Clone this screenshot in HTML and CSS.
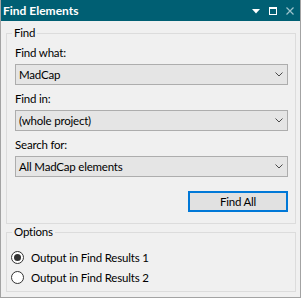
FILE: index.html
```html
<!DOCTYPE html>
<html>
<head>
<meta charset="utf-8">
<link rel="stylesheet" href="styles.css">
</head>
<body>
<div class="window">
  <div class="titlebar">
    <span class="title">Find Elements</span>
    <div class="controls">
      <svg class="ctl-menu" width="8" height="5" viewBox="0 0 8 5"><polygon points="0,0 8,0 4,4.5" fill="#ffffff"/></svg>
      <svg class="ctl-max" width="8" height="8" viewBox="0 0 8 8"><rect x="0.5" y="0.5" width="7" height="7" fill="none" stroke="#ffffff"/><rect x="0" y="0" width="8" height="2" fill="#ffffff"/></svg>
      <svg class="ctl-close" width="8" height="8" viewBox="0 0 8 8"><path d="M0.5 0.5 L7.5 7.5 M7.5 0.5 L0.5 7.5" stroke="#9cc3cc" stroke-width="1.2" fill="none"/></svg>
    </div>
  </div>
  <div class="content">
    <fieldset class="group group-find">
      <legend>Find</legend>
      <div class="field-label first">Find what:</div>
      <div class="combo"><span>MadCap</span><svg width="8" height="5" viewBox="0 0 8 5"><path d="M0.5 0.5 L4 4 L7.5 0.5" stroke="#4a4a4a" fill="none"/></svg></div>
      <div class="field-label">Find in:</div>
      <div class="combo"><span>(whole project)</span><svg width="8" height="5" viewBox="0 0 8 5"><path d="M0.5 0.5 L4 4 L7.5 0.5" stroke="#4a4a4a" fill="none"/></svg></div>
      <div class="field-label">Search for:</div>
      <div class="combo"><span>All MadCap elements</span><svg width="8" height="5" viewBox="0 0 8 5"><path d="M0.5 0.5 L4 4 L7.5 0.5" stroke="#4a4a4a" fill="none"/></svg></div>
      <div class="actions"><button class="btn-default">Find All</button></div>
    </fieldset>
    <fieldset class="group group-options">
      <legend>Options</legend>
      <div class="radio-row"><span class="radio checked"></span>Output in Find Results 1</div>
      <div class="radio-row"><span class="radio"></span>Output in Find Results 2</div>
    </fieldset>
  </div>
</div>
</body>
</html>
```

FILE: styles.css
```css
html, body {
  margin: 0;
  padding: 0;
  background: #f0f0f0;
}
body {
  font-family: "Segoe UI", Lato, "Noto Sans", sans-serif;
  font-size: 11.5px;
  letter-spacing: -0.2px;
  color: #000;
}
.window {
  width: 301px;
  height: 298px;
  box-sizing: border-box;
  border: 1px solid #a3a3a3;
  border-top: none;
  background: #f0f0f0;
  overflow: hidden;
}
.titlebar {
  height: 21px;
  margin: 0 -1px;
  background: #005f73;
  display: flex;
  align-items: center;
  padding-left: 3px;
}
.title {
  color: #fff;
  font-weight: bold;
  font-size: 12px;
  letter-spacing: 0;
  line-height: 16px;
}
.controls {
  margin-left: auto;
  display: flex;
  align-items: center;
  padding-right: 7px;
}
.ctl-menu { margin-right: 9px; margin-top: 1px; }
.ctl-max { margin-right: 9px; }
.group {
  margin: 4px 0 0 5px;
  width: 290px;
  box-sizing: border-box;
  border: 1px solid #dcdcdc;
  min-width: 0;
}
.group legend {
  padding: 0 2px;
  line-height: 16px;
}
.group-find {
  padding: 0 7px 11px 8px;
}
.group-find legend { margin-left: -3px; }
.group-options {
  margin-top: 0;
  padding: 7px 7px 4px 4px;
}
.group-options legend { margin-left: 1px; }
.field-label {
  line-height: 16px;
  margin: 6px 0 3px;
}
.field-label.first { margin-top: 4px; }
.combo {
  height: 21px;
  box-sizing: border-box;
  border: 1px solid #adadad;
  background: #e5e5e5;
  display: flex;
  align-items: center;
  justify-content: space-between;
  padding: 0 4px 0 3px;
  line-height: 16px;
}
.actions {
  display: flex;
  justify-content: flex-end;
  margin-top: 14px;
}
.btn-default {
  width: 100px;
  height: 21px;
  box-sizing: border-box;
  border: 2px solid #0078d7;
  background: #e1e1e1;
  font: inherit;
  letter-spacing: inherit;
  color: #000;
  padding: 0;
}
.radio-row {
  height: 20px;
  display: flex;
  align-items: center;
}
.radio {
  width: 13px;
  height: 13px;
  box-sizing: border-box;
  border: 1px solid #333;
  border-radius: 50%;
  background: #fff;
  margin-right: 7px;
  display: flex;
  align-items: center;
  justify-content: center;
}
.radio.checked::after {
  content: "";
  width: 7px;
  height: 7px;
  border-radius: 50%;
  background: #333;
}
```
